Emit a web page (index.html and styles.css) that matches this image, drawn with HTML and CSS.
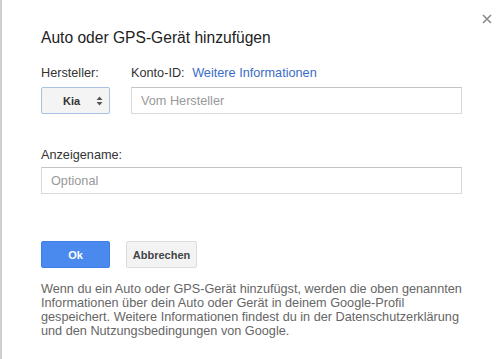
FILE: index.html
```html
<!DOCTYPE html>
<html lang="de">
<head>
<meta charset="utf-8">
<link rel="stylesheet" href="styles.css">
</head>
<body>
<div class="dialog">
  <button class="close" aria-label="Schließen">
    <svg width="10" height="10" viewBox="0 0 10 10"><path d="M1 1L9 9M9 1L1 9" stroke="#8a8a8a" stroke-width="1.6" fill="none"/></svg>
  </button>
  <h1 class="title">Auto oder GPS-Gerät hinzufügen</h1>
  <div class="row">
    <div class="col-make">
      <div class="label">Hersteller:</div>
      <div class="select">
        <span class="select-value">Kia</span>
        <svg class="arrows" width="7" height="10" viewBox="0 0 7 10"><path d="M3.5 0.5L6.5 4H0.5Z M3.5 9.5L6.5 6H0.5Z" fill="#555"/></svg>
      </div>
    </div>
    <div class="col-id">
      <div class="label">Konto-ID: <a class="link" href="#">Weitere Informationen</a></div>
      <div class="input"><span class="placeholder">Vom Hersteller</span></div>
    </div>
  </div>
  <div class="field">
    <div class="label">Anzeigename:</div>
    <div class="input"><span class="placeholder">Optional</span></div>
  </div>
  <div class="buttons">
    <button class="btn btn-ok">Ok</button>
    <button class="btn btn-cancel">Abbrechen</button>
  </div>
  <p class="info">Wenn du ein Auto oder GPS-Gerät hinzufügst, werden die oben genannten<br>Informationen über dein Auto oder Gerät in deinem Google-Profil<br>gespeichert. Weitere Informationen findest du in der Datenschutzerklärung<br>und den Nutzungsbedingungen von Google.</p>
</div>
</body>
</html>
```
FILE: styles.css
```css
html, body {
  margin: 0;
  padding: 0;
  background: #fff;
}
body {
  font-family: "Liberation Sans", Arial, sans-serif;
  width: 500px;
  height: 359px;
  overflow: hidden;
}
.dialog {
  position: relative;
  box-sizing: border-box;
  height: 359px;
  border-left: 2px solid #cfcfcf;
  padding: 28px 38px 0 39px;
}
.close {
  position: absolute;
  top: 14px;
  right: 8px;
  width: 10px;
  height: 10px;
  padding: 0;
  border: 0;
  background: none;
  display: flex;
}
.title {
  margin: 0;
  font-size: 15.6px;
  line-height: 20px;
  font-weight: normal;
  color: #222;
}
.row {
  display: flex;
  gap: 21px;
  margin-top: 17px;
}
.col-make {
  width: 69px;
}
.col-id {
  flex: 1;
}
.label {
  font-size: 12.7px;
  line-height: 16px;
  color: #333;
  margin-bottom: 6px;
  white-space: nowrap;
}
.link {
  color: #3a6cc6;
  text-decoration: none;
  margin-left: 4px;
}
.select {
  box-sizing: border-box;
  height: 27px;
  border: 1px solid #a9bfe3;
  border-radius: 2px;
  background: #f4f4f4;
  display: flex;
  align-items: center;
  padding: 0 6px 0 21px;
}
.select-value {
  flex: 1;
  font-size: 11px;
  font-weight: bold;
  color: #333;
}
.input {
  box-sizing: border-box;
  height: 27px;
  border: 1px solid #d9d9d9;
  border-top-color: #c4c4c4;
  display: flex;
  align-items: center;
  padding: 0 9px;
}
.placeholder {
  font-size: 12.7px;
  color: #999;
}
.field {
  margin-top: 33px;
}
.field .label {
  margin-bottom: 4px;
}
.buttons {
  display: flex;
  gap: 16px;
  margin-top: 47px;
}
.btn {
  box-sizing: border-box;
  height: 27px;
  border-radius: 2px;
  font-family: "Liberation Sans", Arial, sans-serif;
  font-size: 11px;
  font-weight: bold;
  padding: 0;
}
.btn-ok {
  width: 69px;
  background: #4a89ee;
  border: 1px solid #3f7ee4;
  color: #fff;
}
.btn-cancel {
  width: 71px;
  background: #f3f3f3;
  border: 1px solid #dcdcdc;
  color: #444;
}
.info {
  margin: 14px 0 0;
  font-size: 12.7px;
  line-height: 14px;
  color: #666;
  white-space: nowrap;
}
```
